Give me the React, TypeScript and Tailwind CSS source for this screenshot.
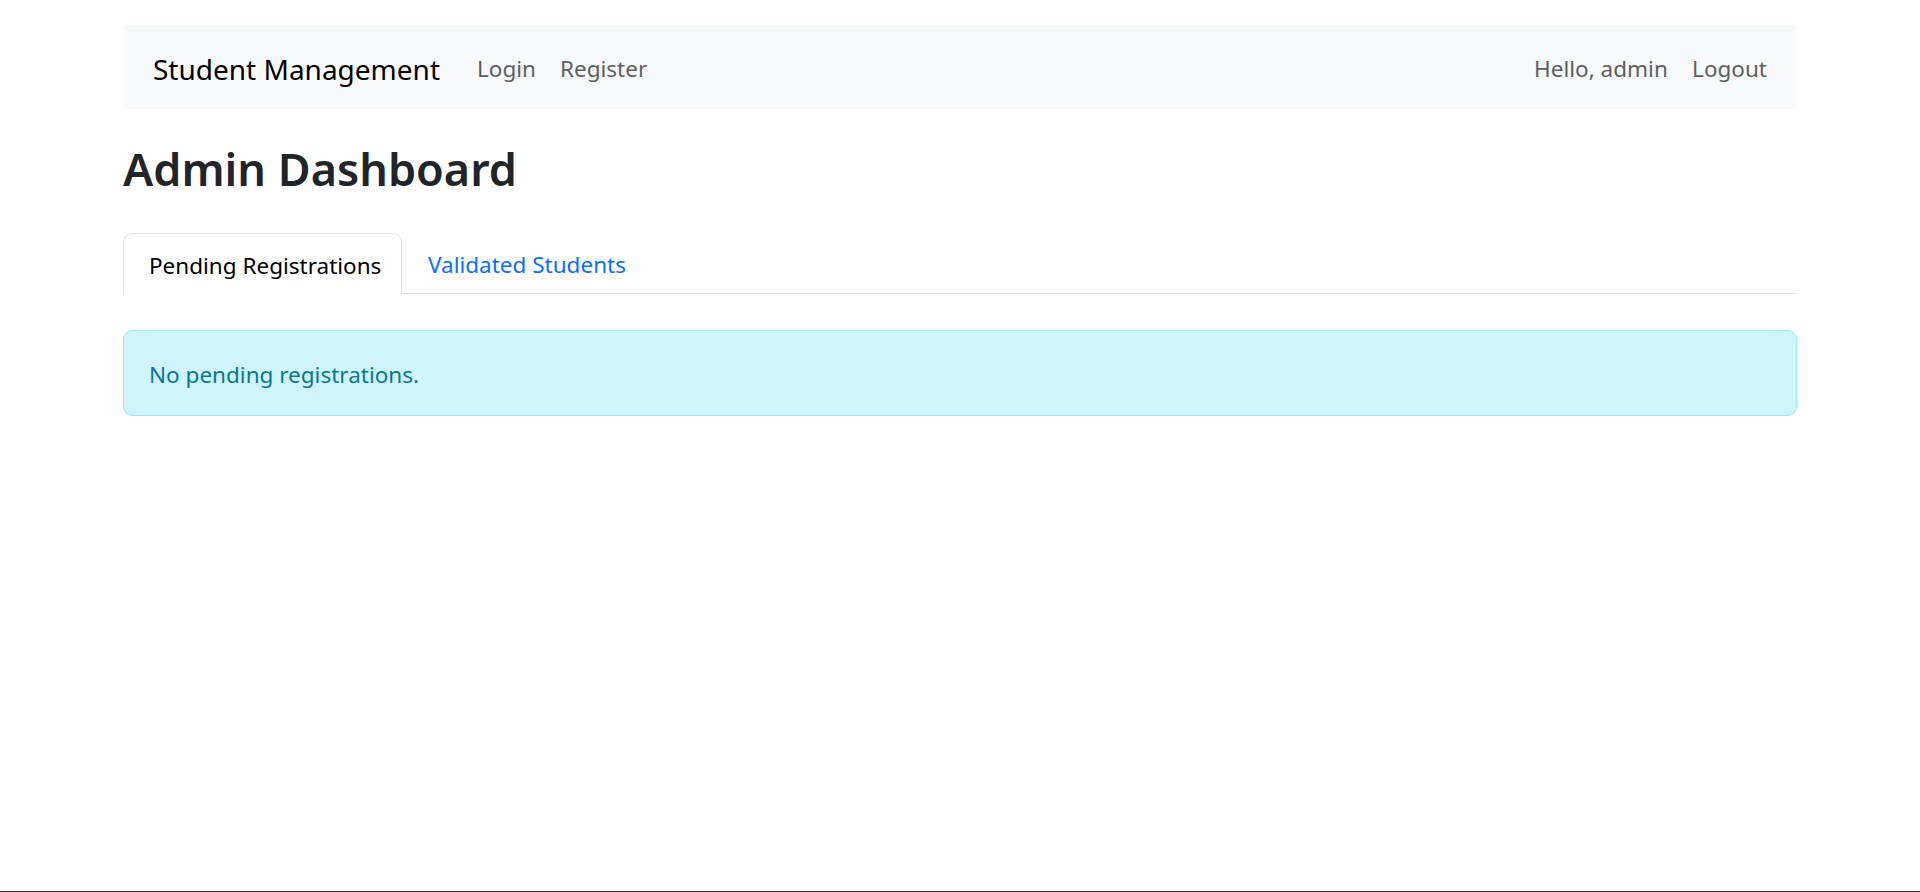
export default function App() {
  return (
    <div
      className="min-h-screen flex flex-col bg-white text-[#212529]"
      style={{ fontFamily: '"Noto Sans", "Open Sans", sans-serif' }}
    >
      <div className="w-[1674px] mx-auto">
        <nav className="mt-[25px] h-[84px] bg-[#f8f9fa] flex items-center justify-between pl-[30px] pr-[30px] pt-[4px]">
          <div className="flex items-center">
            <a className="w-[324px] text-[28px] text-black leading-none">Student Management</a>
            <a className="w-[83px] text-[22.5px] text-[#5c5f62] leading-none">Login</a>
            <a className="text-[22.5px] text-[#5c5f62] leading-none">Register</a>
          </div>
          <div className="flex items-center">
            <span className="w-[158px] text-[22.5px] text-[#5c5f62] leading-none">Hello, admin</span>
            <a className="text-[22.5px] text-[#5c5f62] leading-none">Logout</a>
          </div>
        </nav>

        <h2 className="mt-[32px] text-[45px] leading-[56px] font-semibold text-[#212529]">
          Admin Dashboard
        </h2>

        <div className="mt-[36px] flex border-b border-[#dee2e6] h-[61px]">
          <button className="w-[279px] h-[61px] -mb-px text-left pl-[25px] pt-[4px] text-[22.5px] text-black bg-white border border-[#dee2e6] border-b-white rounded-t-[9px]">
            Pending Registrations
          </button>
          <button className="h-[60px] pl-[26px] pt-[4px] text-[22.5px] text-[#0d6efd]">
            Validated Students
          </button>
        </div>

        <div className="mt-[36px] h-[86px] flex items-center px-[25px] pt-[4px] bg-[#cff4fc] border border-[#9eeaf9] rounded-[9px] text-[22.5px] text-[#087990]">
          No pending registrations.
        </div>
      </div>
      <div className="flex-1" />
      <div className="h-px bg-[#2e2e2e]" />
    </div>
  );
}
